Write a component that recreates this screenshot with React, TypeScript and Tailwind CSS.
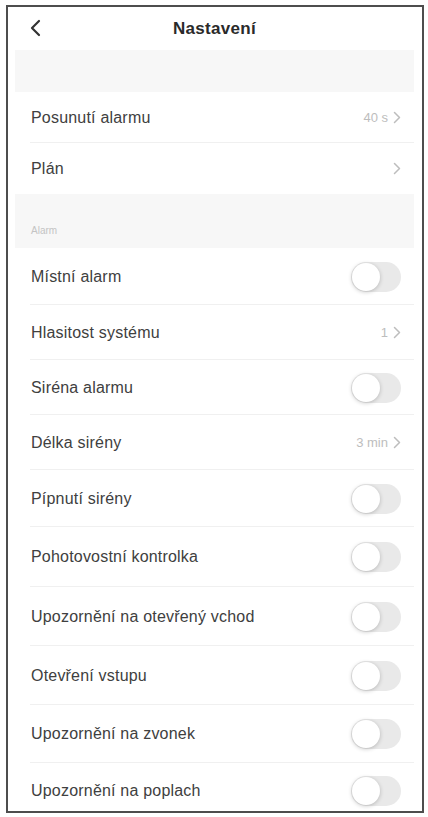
import React from "react";

type Row = {
  label: string;
  h: number;
  value?: string;
  chevron?: boolean;
  toggle?: boolean;
};

const topRows: Row[] = [
  { label: "Posunutí alarmu", h: 51, value: "40 s", chevron: true },
  { label: "Plán", h: 51, chevron: true },
];

const alarmRows: Row[] = [
  { label: "Místní alarm", h: 57, toggle: true },
  { label: "Hlasitost systému", h: 55, value: "1", chevron: true },
  { label: "Siréna alarmu", h: 55, toggle: true },
  { label: "Délka sirény", h: 55, value: "3 min", chevron: true },
  { label: "Pípnutí sirény", h: 57, toggle: true },
  { label: "Pohotovostní kontrolka", h: 60, toggle: true },
  { label: "Upozornění na otevřený vchod", h: 59, toggle: true },
  { label: "Otevření vstupu", h: 59, toggle: true },
  { label: "Upozornění na zvonek", h: 58, toggle: true },
  { label: "Upozornění na poplach", h: 56, toggle: true },
];

function Chevron() {
  return (
    <svg width="8" height="13" viewBox="0 0 8 13" fill="none" className="ml-[5px]">
      <path d="M1.5 1.5l5 5-5 5" stroke="#bdbdbd" strokeWidth="1.5" strokeLinecap="round" strokeLinejoin="round" />
    </svg>
  );
}

function Toggle() {
  return (
    <div className="relative h-[30px] w-[50px] rounded-full bg-[#e9e9e9]">
      <div className="absolute left-[1px] top-[1px] h-[28px] w-[28px] rounded-full bg-white shadow-[0_1px_4px_rgba(0,0,0,0.22)]" />
    </div>
  );
}

function SettingRow({ row, divider }: { row: Row; divider: boolean }) {
  return (
    <div className="relative flex items-center justify-between pl-[16px] pr-[13px]" style={{ height: row.h }}>
      <span className="text-[16px] tracking-[0.2px] text-[#404040]">{row.label}</span>
      {row.toggle ? (
        <Toggle />
      ) : (
        <div className="flex items-center text-[13px] text-[#bdbdbd]">
          {row.value && <span>{row.value}</span>}
          {row.chevron && <Chevron />}
        </div>
      )}
      {divider && <div className="absolute bottom-0 left-[15px] right-0 h-px bg-[#f0f0f0]" />}
    </div>
  );
}

export default function App() {
  return (
    <div className="min-h-screen bg-white pl-[6px] pt-[5px]" style={{ fontFamily: '"Liberation Sans", Arial, sans-serif' }}>
      <div className="h-[808px] w-[418px] overflow-hidden border-2 border-[#4d4d4d] bg-white pl-[7px] pr-[8px]">
        <header className="relative flex h-[43px] items-center justify-center">
          <svg width="12" height="18" viewBox="0 0 12 18" fill="none" className="absolute left-[14px] top-[12px]">
            <path d="M10 2L3 9l7 7" stroke="#333" strokeWidth="2.2" strokeLinecap="round" strokeLinejoin="round" />
          </svg>
          <h1 className="text-[17px] font-bold tracking-[0.3px] text-[#2a2a2a]">Nastavení</h1>
        </header>

        <div className="h-[42px] bg-[#f7f7f7]" />

        {topRows.map((row, i) => (
          <SettingRow key={row.label} row={row} divider={i < topRows.length - 1} />
        ))}

        <div className="flex h-[54px] items-end bg-[#f7f7f7] pb-[10px] pl-[16px]">
          <span className="text-[10px] text-[#c4c4c4]">Alarm</span>
        </div>

        {alarmRows.map((row, i) => (
          <SettingRow key={row.label} row={row} divider={i < alarmRows.length - 1} />
        ))}
      </div>
    </div>
  );
}
